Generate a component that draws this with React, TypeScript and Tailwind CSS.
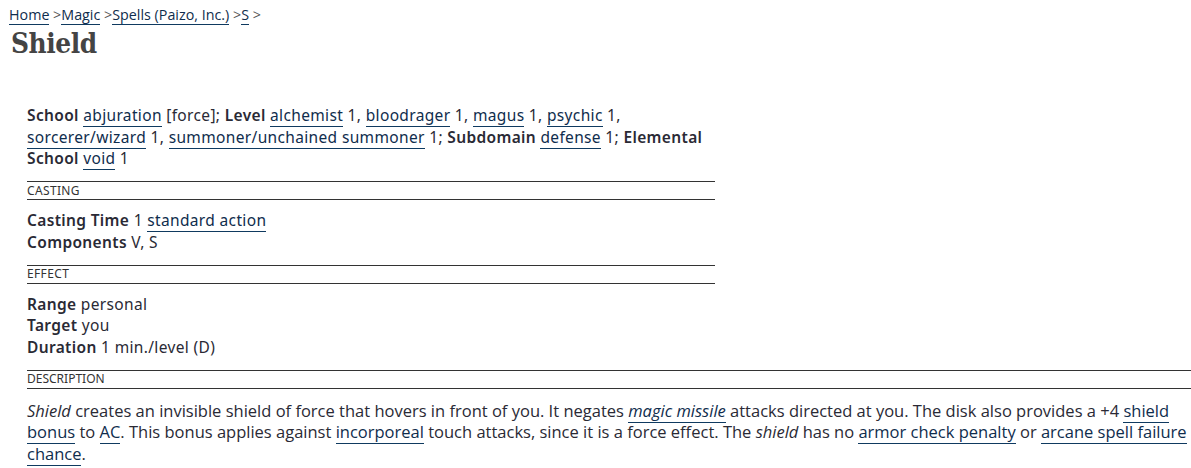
import React from "react";

const statFont = { fontFamily: "'Noto Sans', sans-serif" };

function L({ children }: { children: React.ReactNode }) {
	return (
		<a
			href="#"
			className="text-[#0f2d4d] border-b border-[#0f3a60] no-underline leading-[1]">
			{children}
		</a>
	);
}

function Section({ title }: { title: string }) {
	return (
		<div className="border-t border-b border-[#333] mt-[11px] mb-[10px] h-[19px] flex items-center text-[12px] text-[#333] leading-none">
			{title}
		</div>
	);
}

export default function App() {
	return (
		<div className="bg-white text-[#2a2a35] w-[1191px] h-[468px] overflow-hidden">
			<div
				className="pl-[9px] pt-[6px] text-[14.3px] text-[#555] h-[22px] leading-[18px]"
				style={{ fontFamily: "'Open Sans', sans-serif" }}>
				<L>Home</L> &gt;<L>Magic</L> &gt;<L>Spells (Paizo, Inc.)</L> &gt;
				<L>S</L> &gt;
			</div>
			<h1
				className="pl-[11px] pt-[3px] text-[28px] font-bold text-[#444] leading-[38px] tracking-[-0.5px]"
				style={{ fontFamily: "'DejaVu Serif', serif" }}>
				<span className="inline-block scale-x-[0.89] origin-left">Shield</span>
			</h1>
			<div className="pl-[27px] pt-[42px]" style={statFont}>
				<div className="w-[688px] text-[15.5px] leading-[21.7px] tracking-[0.35px]">
					<div>
						<b className="font-semibold">School</b> <L>abjuration</L> [force]; <b className="font-semibold">Level</b>{" "}
						<L>alchemist</L> 1, <L>bloodrager</L> 1, <L>magus</L> 1,{" "}
						<L>psychic</L> 1, <L>sorcerer/wizard</L> 1,{" "}
						<L>summoner/unchained summoner</L> 1; <b className="font-semibold">Subdomain</b>{" "}
						<L>defense</L> 1; <b className="font-semibold">Elemental School</b> <L>void</L> 1
					</div>
					<Section title="CASTING" />
					<div>
						<b className="font-semibold">Casting Time</b> 1 <L>standard action</L>
					</div>
					<div>
						<b className="font-semibold">Components</b> V, S
					</div>
					<Section title="EFFECT" />
					<div>
						<b className="font-semibold">Range</b> personal
					</div>
					<div>
						<b className="font-semibold">Target</b> you
					</div>
					<div>
						<b className="font-semibold">Duration</b> 1 min./level (D)
					</div>
				</div>
				<div className="border-t border-b border-[#333] mt-[11px] mb-[11px] h-[19px] flex items-center text-[12px] text-[#333] leading-none">
					DESCRIPTION
				</div>
				<p
					className="text-[16.5px] leading-[21.5px]"
					style={{ fontFamily: "'Open Sans', sans-serif" }}>
					<i>Shield</i> creates an invisible shield of force that hovers in front
					of you. It negates{" "}
					<L>
						<i>magic missile</i>
					</L>{" "}
					attacks directed at you. The disk also provides a +4{" "}
					<L>shield bonus</L> to <L>AC</L>. This bonus applies against{" "}
					<L>incorporeal</L> touch attacks, since it is a force effect. The{" "}
					<i>shield</i> has no <L>armor check penalty</L> or{" "}
					<L>arcane spell failure chance</L>.
				</p>
			</div>
		</div>
	);
}
